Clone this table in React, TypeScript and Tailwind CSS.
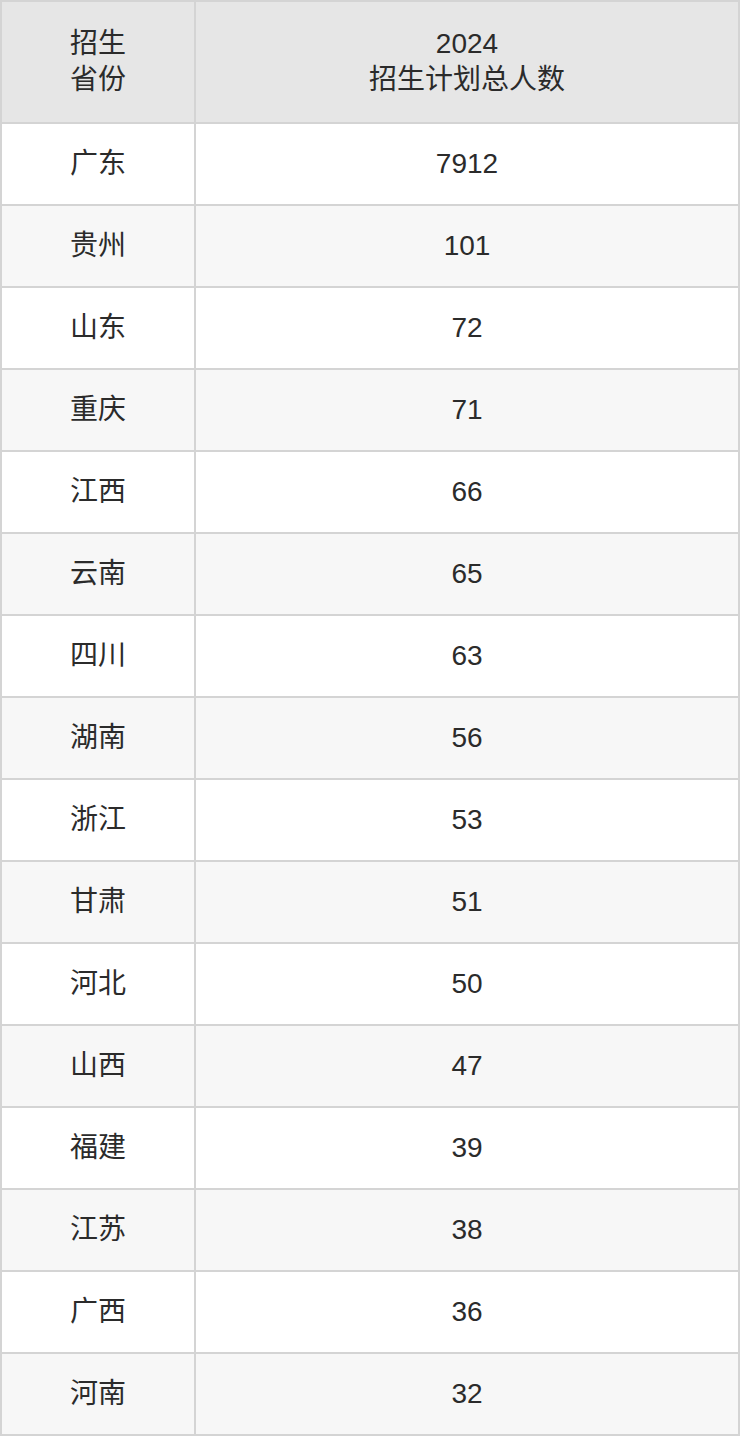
const ROWS: [string, string][] = [
  ['广东', '7912'],
  ['贵州', '101'],
  ['山东', '72'],
  ['重庆', '71'],
  ['江西', '66'],
  ['云南', '65'],
  ['四川', '63'],
  ['湖南', '56'],
  ['浙江', '53'],
  ['甘肃', '51'],
  ['河北', '50'],
  ['山西', '47'],
  ['福建', '39'],
  ['江苏', '38'],
  ['广西', '36'],
  ['河南', '32'],
];

export default function App() {
  return (
    <div
      className="w-[740px] bg-[#d4d4d4] p-[2px] text-[28px] leading-[36px] text-[#2b2b2b]"
      style={{ fontFamily: '"Liberation Sans", "Noto Sans CJK SC", sans-serif' }}
    >
      <div className="grid grid-cols-[192px_1fr] gap-[2px]">
        <div className="flex h-[120px] flex-col items-center justify-center bg-[#e6e6e6]">
          <span>招生</span>
          <span>省份</span>
        </div>
        <div className="flex h-[120px] flex-col items-center justify-center bg-[#e6e6e6]">
          <span>2024</span>
          <span>招生计划总人数</span>
        </div>
        {ROWS.map(([prov, n], i) => {
          const bg = i % 2 === 0 ? 'bg-white' : 'bg-[#f7f7f7]';
          return [
            <div key={prov + 'a'} className={`flex h-[80px] items-center justify-center ${bg}`}>{prov}</div>,
            <div key={prov + 'b'} className={`flex h-[80px] items-center justify-center ${bg}`}>{n}</div>,
          ];
        })}
      </div>
    </div>
  );
}
